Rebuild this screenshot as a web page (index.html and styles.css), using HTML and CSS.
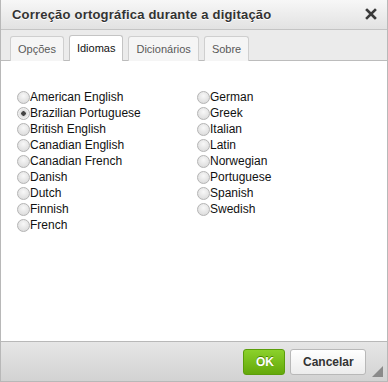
FILE: index.html
```html
<!DOCTYPE html>
<html lang="pt">

<head>
    <meta charset="UTF-8" />
    <title>Correção ortográfica</title>
    <link rel="stylesheet" href="styles.css">
</head>

<body>
    <div class="dialog">
        <!-- Title bar -->
        <div class="dialog-title">
            <span>Correção ortográfica durante a digitação</span>
            <svg class="close" width="12" height="12" viewBox="0 0 12 12">
                <path d="M2 2 L10 10 M10 2 L2 10" stroke="#3a3a3a" stroke-width="2.6" stroke-linecap="square" />
            </svg>
        </div>

        <!-- Tabs -->
        <div class="tabs">
            <div class="tab">Opções</div>
            <div class="tab active">Idiomas</div>
            <div class="tab">Dicionários</div>
            <div class="tab">Sobre</div>
        </div>

        <!-- Languages -->
        <div class="dialog-body">
            <div class="lang-col">
                <label><input type="radio" name="lang">American English</label>
                <label><input type="radio" name="lang" checked>Brazilian Portuguese</label>
                <label><input type="radio" name="lang">British English</label>
                <label><input type="radio" name="lang">Canadian English</label>
                <label><input type="radio" name="lang">Canadian French</label>
                <label><input type="radio" name="lang">Danish</label>
                <label><input type="radio" name="lang">Dutch</label>
                <label><input type="radio" name="lang">Finnish</label>
                <label><input type="radio" name="lang">French</label>
            </div>
            <div class="lang-col">
                <label><input type="radio" name="lang">German</label>
                <label><input type="radio" name="lang">Greek</label>
                <label><input type="radio" name="lang">Italian</label>
                <label><input type="radio" name="lang">Latin</label>
                <label><input type="radio" name="lang">Norwegian</label>
                <label><input type="radio" name="lang">Portuguese</label>
                <label><input type="radio" name="lang">Spanish</label>
                <label><input type="radio" name="lang">Swedish</label>
            </div>
        </div>

        <!-- Footer -->
        <div class="dialog-footer">
            <button class="btn btn-ok">OK</button>
            <button class="btn btn-cancel">Cancelar</button>
            <span class="grip"></span>
        </div>
    </div>
</body>

</html>
```

FILE: styles.css
```css
html,
body {
    margin: 0;
    padding: 0;
    background: #fff;
    font-family: 'Liberation Sans', Arial, sans-serif;
}

* {
    box-sizing: border-box;
}

.dialog {
    width: 388px;
    height: 382px;
    display: flex;
    flex-direction: column;
    border: 1px solid #b8b8b8;
    border-top: none;
}

/* Title bar */
.dialog-title {
    height: 30px;
    display: flex;
    justify-content: space-between;
    align-items: center;
    padding: 0 10px 0 11px;
    background: linear-gradient(#f7f7f7, #e2e2e2);
    border-bottom: 1px solid #c4c4c4;
    font-size: 13px;
    letter-spacing: 0.2px;
    font-weight: bold;
    color: #333;
    text-shadow: 0 1px 0 #fff;
}

.close {
    margin-top: -2px;
}

/* Tabs */
.tabs {
    height: 31px;
    display: flex;
    align-items: flex-end;
    gap: 5px;
    padding: 0 9px;
    background: #ebebeb;
    border-bottom: 1px solid #bcbcbc;
}

.tab {
    height: 25px;
    margin-bottom: -1px;
    padding: 0 7px;
    line-height: 24px;
    font-size: 11px;
    color: #595959;
    background: #f5f5f5;
    border: 1px solid #cfcfcf;
    border-bottom: none;
    border-radius: 3px 3px 0 0;
}

.tab.active {
    height: 26px;
    color: #111;
    background: #fff;
    border-color: #c4c4c4;
}

/* Body */
.dialog-body {
    flex: 1;
    display: flex;
    padding: 28px 0 0 16px;
    background: #fff;
}

.lang-col {
    width: 180px;
    display: flex;
    flex-direction: column;
}

.lang-col label {
    display: flex;
    align-items: center;
    height: 16px;
    font-size: 12px;
    color: #111;
}

.lang-col input {
    appearance: none;
    width: 13px;
    height: 13px;
    margin: 0;
    border-radius: 50%;
    border: 1px solid #b4b4b4;
    background: radial-gradient(circle at 50% 35%, #f8f8f8, #d6d6d6);
}

.lang-col input:checked {
    background: radial-gradient(circle, #444 0 2px, #d8d8d8 2.5px, #f0f0f0 5px);
}

/* Footer */
.dialog-footer {
    height: 40px;
    display: flex;
    align-items: center;
    justify-content: flex-end;
    gap: 5px;
    padding: 0 21px 0 0;
    position: relative;
    background: linear-gradient(#e6e6e6, #d2d2d2);
    border-top: 1px solid #b8b8b8;
}

.btn {
    height: 26px;
    padding: 0 12px;
    border-radius: 3px;
    font-family: 'Liberation Sans', Arial, sans-serif;
    font-size: 12px;
    font-weight: bold;
}

.btn-ok {
    width: 42px;
    color: #fff;
    background: linear-gradient(#8bd12b, #64a80a);
    border: 1px solid #5b9d0a;
    text-shadow: 0 -1px 0 #4a8200;
}

.btn-cancel {
    width: 76px;
    color: #333;
    background: linear-gradient(#fff, #ececec);
    border: 1px solid #b8b8b8;
}

.grip {
    position: absolute;
    right: 4px;
    bottom: 4px;
    width: 0;
    height: 0;
    border-left: 11px solid transparent;
    border-bottom: 11px solid #8a8a8a;
}
```
